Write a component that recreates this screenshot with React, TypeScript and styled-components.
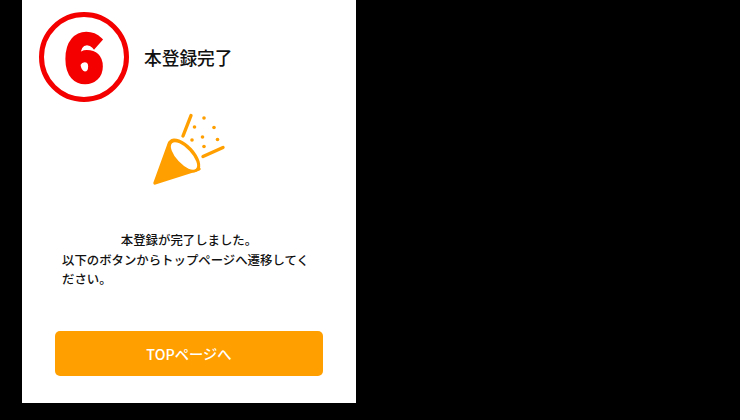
import React from 'react'
import styled, { createGlobalStyle } from 'styled-components'

const GlobalStyle = createGlobalStyle`
  html, body {
    margin: 0;
    padding: 0;
    background: #000;
    height: 100%;
    overflow: hidden;
  }
  body {
    font-family: "Noto Sans CJK JP", "Noto Sans", sans-serif;
  }
`

const Page = styled.div`
  width: 740px;
  height: 420px;
  background: #000;
  padding-left: 22px;
  box-sizing: border-box;
`

const Panel = styled.main`
  width: 334px;
  height: 403px;
  background: #fff;
  box-sizing: border-box;
  padding-top: 12px;
  display: flex;
  flex-direction: column;
`

const Header = styled.header`
  display: flex;
  align-items: center;
  gap: 15px;
  padding-left: 17px;
`

const StepBadge = styled.div`
  width: 90px;
  height: 90px;
  box-sizing: border-box;
  border: 5px solid #f40000;
  border-radius: 50%;
  padding-bottom: 8px;
  display: flex;
  align-items: center;
  justify-content: center;
  color: #f40000;
  font-family: "Noto Sans CJK JP", sans-serif;
  font-weight: 900;
  font-size: 63px;
  line-height: 1;
  -webkit-text-stroke: 4.5px #f40000;
`

const Title = styled.h1`
  margin: 2px 0 0;
  font-size: 17.7px;
  font-weight: 500;
  color: #111;
  line-height: 1.2;
`

const IconWrap = styled.div`
  display: flex;
  justify-content: center;
  margin-top: 3px;
  padding-left: 2px;
`

const Message = styled.p`
  margin: 36px 40px 0;
  font-size: 12.4px;
  font-weight: 500;
  line-height: 19.5px;
  color: #111;
`

const CenterLine = styled.span`
  display: block;
  text-align: center;
`

const TopButton = styled.button`
  display: block;
  width: 268px;
  height: 45px;
  margin: 41px 0 0 33px;
  border: none;
  border-radius: 5px;
  background: #ff9f00;
  color: #fff;
  font-family: inherit;
  font-size: 14.3px;
  font-weight: 500;
  padding: 0;
`

const PARTY_DOTS = [
  [64, 13], [54.5, 22], [74, 22.5], [52, 35], [62.5, 32], [77.5, 34.5], [64, 41.5],
]

function PartyIcon() {
  return (
    <svg width="100" height="90" viewBox="0 0 100 90" aria-hidden="true">
      <path d="M15 78 L29.5 38 L59 64 Z" fill="#ff9f00" stroke="#ff9f00" strokeWidth="3.4" strokeLinejoin="round" />
      <ellipse cx="44" cy="50.5" rx="21" ry="10.5" transform="rotate(47 44 50.5)" fill="#ff9f00" />
      <ellipse cx="44" cy="51" rx="17.5" ry="7.5" transform="rotate(47 44 51)" fill="#fff" />
      <path d="M51 10.5 L43 31" stroke="#ff9f00" strokeWidth="3.4" strokeLinecap="round" fill="none" />
      <path d="M63 51.5 L83 42.5" stroke="#ff9f00" strokeWidth="3.4" strokeLinecap="round" fill="none" />
      {PARTY_DOTS.map(([x, y], i) => (
        <circle key={i} cx={x} cy={y} r="1.8" fill="#ff9f00" />
      ))}
    </svg>
  )
}

export default function App() {
  return (
    <Page>
      <GlobalStyle />
      <Panel>
        <Header>
          <StepBadge>6</StepBadge>
          <Title>本登録完了</Title>
        </Header>
        <IconWrap>
          <PartyIcon />
        </IconWrap>
        <Message>
          <CenterLine>本登録が完了しました。</CenterLine>
          以下のボタンからトップページへ遷移してください。
        </Message>
        <TopButton>TOPページへ</TopButton>
      </Panel>
    </Page>
  )
}
